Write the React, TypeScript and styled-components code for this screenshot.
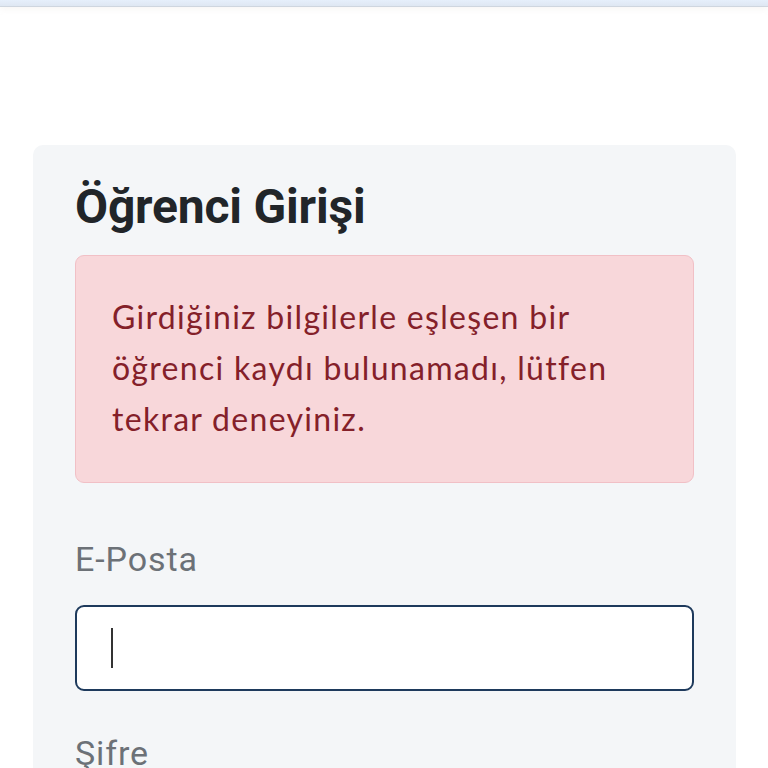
import React from "react";
import styled, { createGlobalStyle } from "styled-components";

const Global = createGlobalStyle`
  html, body { margin: 0; padding: 0; background: #ffffff; }
  body { font-family: Lato, "Open Sans", sans-serif; }
  * { box-sizing: border-box; }
`;

const Page = styled.div`
  width: 768px;
  height: 768px;
  overflow: hidden;
  background: #ffffff;
  display: flex;
  flex-direction: column;
`;

const TopStrip = styled.div`
  flex-shrink: 0;
  height: 7px;
  background: linear-gradient(#e6effb, #dfe7f2);
  border-bottom: 1px solid #cfd6df;
  box-shadow: 0 2px 6px rgba(200, 190, 180, 0.15);
`;

const Main = styled.main`
  flex-shrink: 0;
  padding: 138px 32px 0 33px;
`;

const Card = styled.section`
  background: #f4f6f8;
  border-radius: 10px;
  padding: 34px 42px 40px 42px;
  display: flex;
  flex-direction: column;
  min-height: 700px;
`;

const Title = styled.h1`
  margin: 0 0 20px 0;
  font-family: Roboto, "Liberation Sans", sans-serif;
  font-weight: 700;
  font-size: 48px;
  line-height: 56px;
  color: #212529;
  letter-spacing: -0.2px;
`;

const Alert = styled.div`
  background: #f8d7da;
  border: 1.5px solid #f1c0c6;
  border-radius: 9px;
  color: #842029;
  padding: 35px 30px 38px 36px;
  font-size: 32px;
  line-height: 51px;
  letter-spacing: 1.3px;
  font-family: Lato, "Open Sans", sans-serif;
`;

const Field = styled.div`
  display: flex;
  flex-direction: column;
`;

const Label = styled.label<{ $top: number }>`
  color: #6c7177;
  font-size: 34px;
  line-height: 40px;
  letter-spacing: 0.9px;
  font-family: Roboto, "Liberation Sans", sans-serif;
  margin-top: ${(p) => p.$top}px;
`;

const Input = styled.div`
  margin-top: 26px;
  height: 86px;
  background: #ffffff;
  border: 2px solid #1e3a5c;
  border-radius: 9px;
  display: flex;
  align-items: center;
  padding-left: 34px;
`;

const Caret = styled.span`
  width: 2px;
  height: 40px;
  background: #333;
`;

export default function App() {
  return (
    <Page>
      <Global />
      <TopStrip />
      <Main>
        <Card>
          <Title>Öğrenci Girişi</Title>
          <Alert>
            Girdiğiniz bilgilerle eşleşen bir
            <br />
            öğrenci kaydı bulunamadı, lütfen
            <br />
            tekrar deneyiniz.
          </Alert>
          <Field>
            <Label $top={56}>E-Posta</Label>
            <Input>
              <Caret />
            </Input>
          </Field>
          <Field>
            <Label $top={42}>Şifre</Label>
          </Field>
        </Card>
      </Main>
    </Page>
  );
}
